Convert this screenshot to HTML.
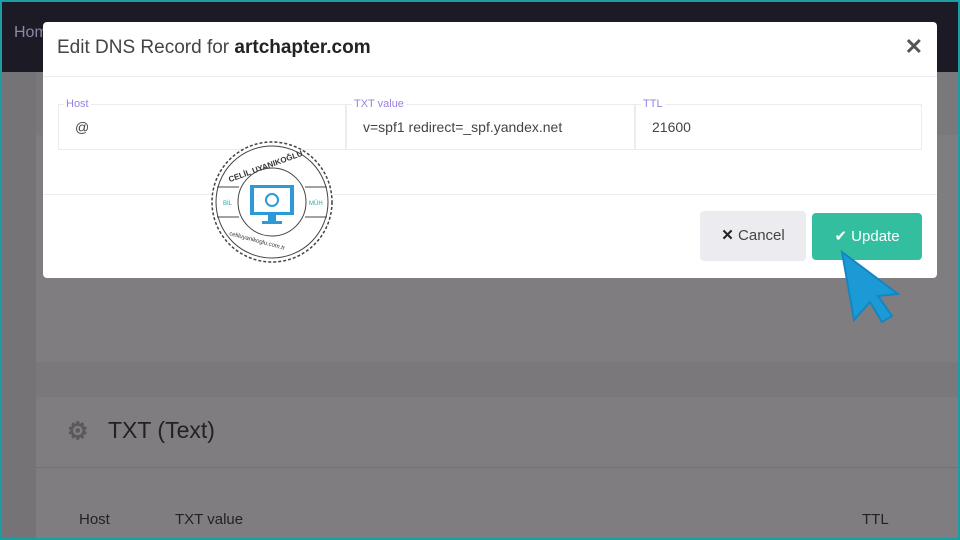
<!DOCTYPE html>
<html><head><style>
*{margin:0;padding:0;box-sizing:border-box}
body{width:960px;height:540px;overflow:hidden;position:relative;background:#7a787b;font-family:"Liberation Sans",sans-serif}
.frame{position:absolute;inset:0;border:2px solid #1a9ea3;z-index:50;pointer-events:none}
.top{position:absolute;left:0;top:0;width:960px;height:72px;background:#1c1a25}
.side{position:absolute;left:0;top:72px;width:36px;height:468px;background:#757376}
.card{position:absolute;left:36px;background:#7f7d80}
.modal{position:absolute;left:43px;top:22px;width:894px;height:256px;background:#fff;border-radius:4px}
.fld{position:absolute;top:82px;height:46px;border:1px solid #ebebf0}
.fld label{position:absolute;top:-7px;left:5px;background:#fff;padding:0 2px;font-size:11px;color:#9a80e0}
.fld span{position:absolute;left:16px;top:14px;font-size:14px;color:#444}
</style></head><body>
<div class="top"><span style="position:absolute;left:14px;top:24px;color:#8f86a8;font-size:16px">Hom</span></div>
<div class="side"></div>
<div class="card" style="top:135px;width:924px;height:227px"></div>
<div class="card" style="top:397px;width:924px;height:143px">
 <div style="position:absolute;left:0;top:70px;width:924px;height:1px;background:#737174"></div>
 <div style="position:absolute;left:31px;top:20px;font-size:24px;color:#5a585c;font-weight:bold">⚙</div>
 <div style="position:absolute;left:72px;top:20px;font-size:23px;color:#222">TXT (Text)</div>
 <div style="position:absolute;left:43px;top:114px;font-size:15px;color:#222">Host</div>
 <div style="position:absolute;left:139px;top:114px;font-size:15px;color:#222">TXT value</div>
 <div style="position:absolute;left:826px;top:114px;font-size:15px;color:#222">TTL</div>
</div>
<div class="modal">
 <div style="position:absolute;left:14px;top:15px;font-size:19px;color:#444">Edit DNS Record for <b style="color:#222">artchapter.com</b></div>
 <div style="position:absolute;right:14px;top:12px;font-size:22px;color:#555;font-weight:bold">✕</div>
 <div style="position:absolute;left:0;top:54px;width:894px;height:1px;background:#ececf0"></div>
 <div class="fld" style="left:15px;width:288px"><label>Host</label><span>@</span></div>
 <div class="fld" style="left:303px;width:289px"><label>TXT value</label><span>v=spf1 redirect=_spf.yandex.net</span></div>
 <div class="fld" style="left:592px;width:287px"><label>TTL</label><span>21600</span></div>
 <div style="position:absolute;left:0;top:172px;width:894px;height:1px;background:#ececf0"></div>
 <div style="position:absolute;left:657px;top:189px;width:106px;height:50px;background:#ecebef;border-radius:4px;font-size:15px;color:#444;text-align:center;line-height:50px"><b style="color:#222">✕</b> Cancel</div>
 <div style="position:absolute;left:769px;top:191px;width:110px;height:47px;background:#33bf9f;border-radius:4px;font-size:15px;color:#fff;text-align:center;line-height:47px">✔ Update</div>
 <svg style="position:absolute;left:166px;top:117px" width="126" height="126" viewBox="0 0 126 126">
  <circle cx="63" cy="63" r="60" fill="#fff" stroke="#444" stroke-width="1.5" stroke-dasharray="3 2"/>
  <circle cx="63" cy="63" r="56" fill="none" stroke="#444" stroke-width="1"/>
  <circle cx="63" cy="63" r="34" fill="none" stroke="#444" stroke-width="1"/>
  <line x1="8" y1="48" x2="30" y2="48" stroke="#444"/><line x1="96" y1="48" x2="118" y2="48" stroke="#444"/>
  <line x1="8" y1="78" x2="30" y2="78" stroke="#444"/><line x1="96" y1="78" x2="118" y2="78" stroke="#444"/>
  <text x="14" y="66" font-size="6" fill="#2aa">BİL</text><text x="100" y="66" font-size="6" fill="#2aa">MÜH</text>
  <rect x="41" y="46" width="44" height="30" fill="#2d9ad8"/><rect x="45" y="49" width="36" height="24" fill="#fff"/>
  <circle cx="63" cy="61" r="6" fill="none" stroke="#2d9ad8" stroke-width="2"/>
  <rect x="59" y="76" width="8" height="6" fill="#2d9ad8"/><rect x="53" y="82" width="20" height="3" fill="#2d9ad8"/>
  <text x="30" y="30" font-size="8" fill="#333" font-weight="bold" transform="rotate(-20 63 63)">CELİL UYANIKOĞLU</text>
  <text x="30" y="106" font-size="6" fill="#333" transform="rotate(15 63 63)">celiluyanikoglu.com.tr</text>
 </svg>
</div>
<svg style="position:absolute;left:838px;top:250px" width="64" height="74" viewBox="0 0 64 74">
 <path d="M4 2 L60 44 L40 46 L54 66 L44 72 L32 52 L16 70 Z" fill="#1b9ad6" stroke="#1486c0" stroke-width="2"/>
</svg>
<div class="frame"></div>
</body></html>
